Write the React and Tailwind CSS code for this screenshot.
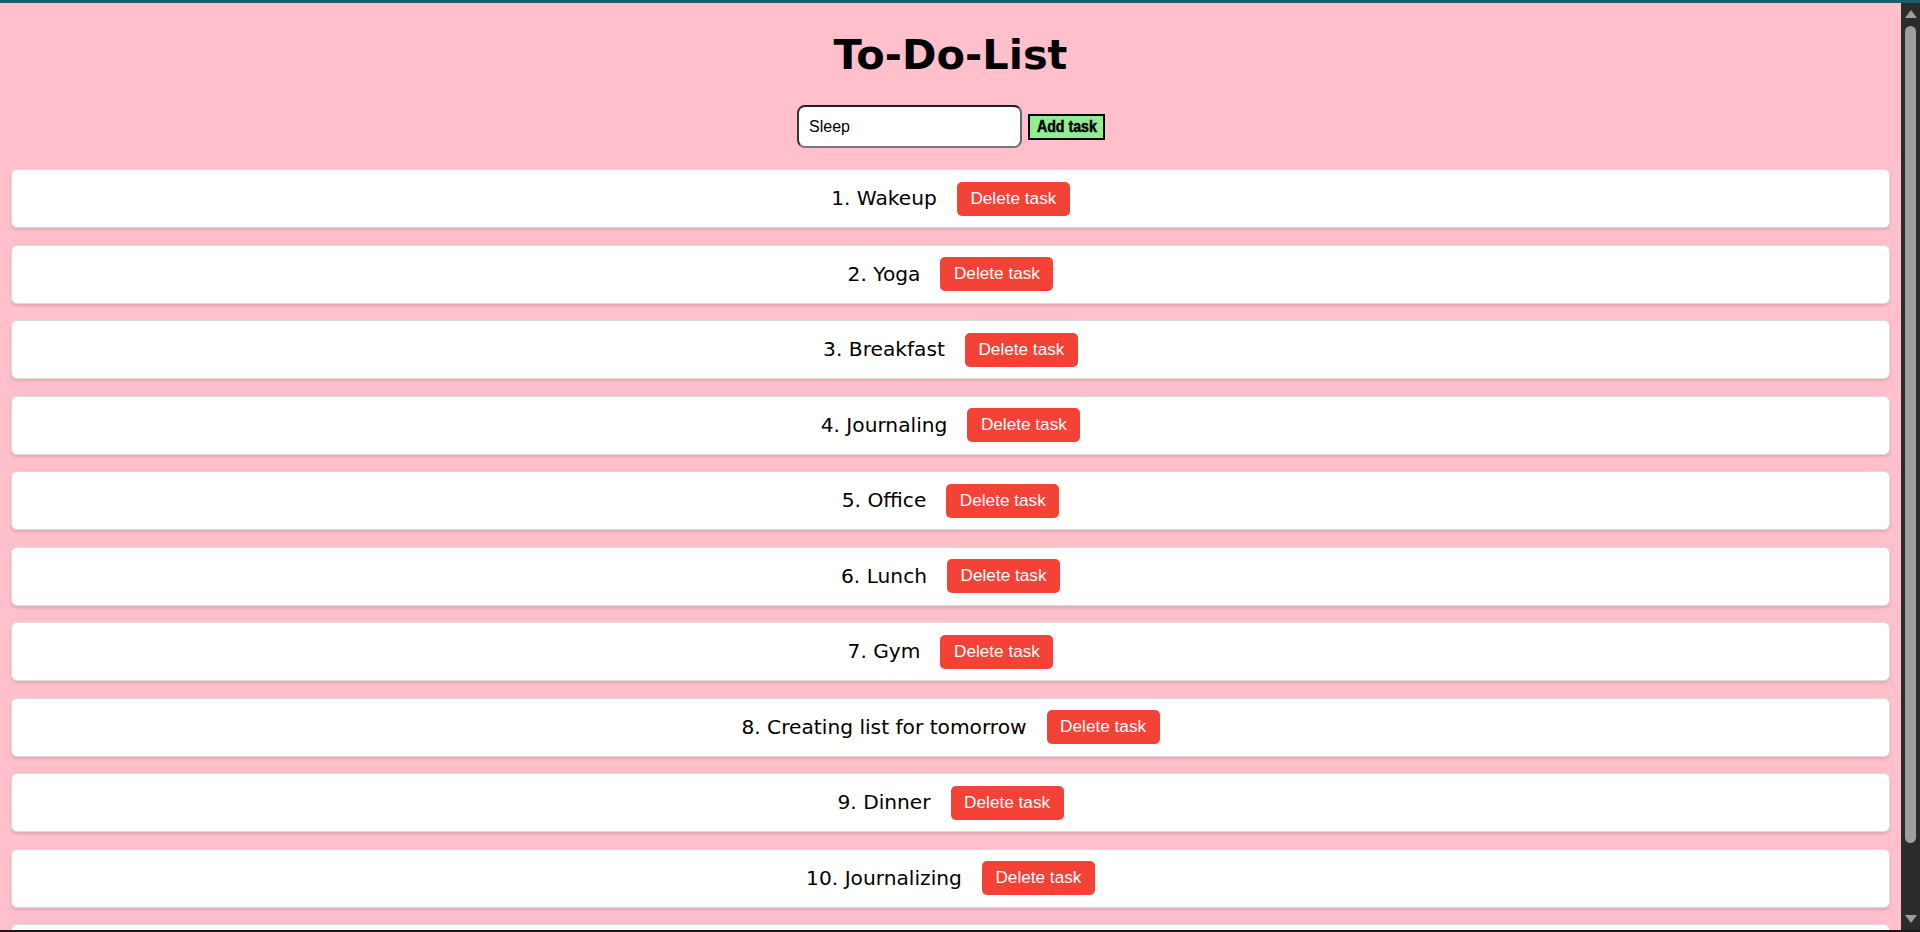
import React from "react";

const tasks = [
  "Wakeup",
  "Yoga",
  "Breakfast",
  "Journaling",
  "Office",
  "Lunch",
  "Gym",
  "Creating list for tomorrow",
  "Dinner",
  "Journalizing",
];

export default function App() {
  return (
    <div className="h-[932px] w-[1920px] flex flex-col overflow-hidden bg-[#ffc0cb]">
      <div className="h-[3px] shrink-0 bg-[#1d5b72]" />
      <div className="flex flex-1 min-h-0">
        <main className="flex-1 min-w-0 overflow-hidden">
          <h1
            className="mt-[28px] text-center text-[41.5px] font-bold text-black leading-[48px]"
            style={{ fontFamily: '"DejaVu Sans", Verdana, sans-serif' }}
          >
            To-Do-List
          </h1>
          <div className="mt-[26px] flex justify-center items-center gap-[6px] pl-[1px]">
            <input
              readOnly
              value="Sleep"
              className="w-[225px] h-[43px] rounded-[8px] border-2 border-t-[#222] border-l-[#333] border-r-[#666] border-b-[#777] bg-white pl-[10px] text-[16px] text-black outline-none"
              style={{ fontFamily: '"Liberation Sans", Arial, sans-serif' }}
            />
            <button
              className="w-[77px] h-[26px] bg-[#90ee90] border-2 border-black flex items-center justify-center overflow-hidden"
            >
              <span
                className="inline-block text-[16.5px] font-bold text-black leading-none scale-x-[0.86] [-webkit-text-stroke:0.5px_black] whitespace-nowrap"
                style={{ fontFamily: '"Liberation Sans", Arial, sans-serif' }}
              >
                Add task
              </span>
            </button>
          </div>
          <ul className="mt-[21px] px-[11px] flex flex-col gap-[16.5px]">
            {tasks.map((t, i) => (
              <li
                key={i}
                className="h-[59px] shrink-0 bg-white rounded-[6px] border border-[#dcdcdc] shadow-[0_2px_3px_rgba(0,0,0,0.12)] flex items-center justify-center"
              >
                <span
                  className="text-[20.2px] text-black"
                  style={{ fontFamily: '"DejaVu Sans", Verdana, sans-serif' }}
                >
                  {i + 1}. {t}
                </span>
                <button
                  className="ml-[20px] h-[34px] px-[13.5px] rounded-[5px] bg-[#f44336] text-white text-[17.2px]"
                  style={{ fontFamily: '"Liberation Sans", Arial, sans-serif' }}
                >
                  Delete task
                </button>
              </li>
            ))}
            <li className="h-[59px] shrink-0 bg-white rounded-[6px] border border-[#dcdcdc] shadow-[0_2px_3px_rgba(0,0,0,0.12)]" />
          </ul>
        </main>
        <div className="w-[19px] shrink-0 bg-[#2b2b2b] flex flex-col items-center py-[7px]">
          <svg width="12" height="8" viewBox="0 0 12 8" className="shrink-0">
            <polygon points="6,0 12,8 0,8" fill="#9e9e9e" />
          </svg>
          <div className="mt-[8px] w-[11px] h-[817px] rounded-full bg-[#9e9e9e] shrink-0" />
          <div className="flex-1" />
          <svg width="12" height="8" viewBox="0 0 12 8" className="shrink-0">
            <polygon points="0,0 12,0 6,8" fill="#9e9e9e" />
          </svg>
        </div>
      </div>
      <div className="h-[2px] shrink-0 bg-[#1a1a1a]" />
    </div>
  );
}
